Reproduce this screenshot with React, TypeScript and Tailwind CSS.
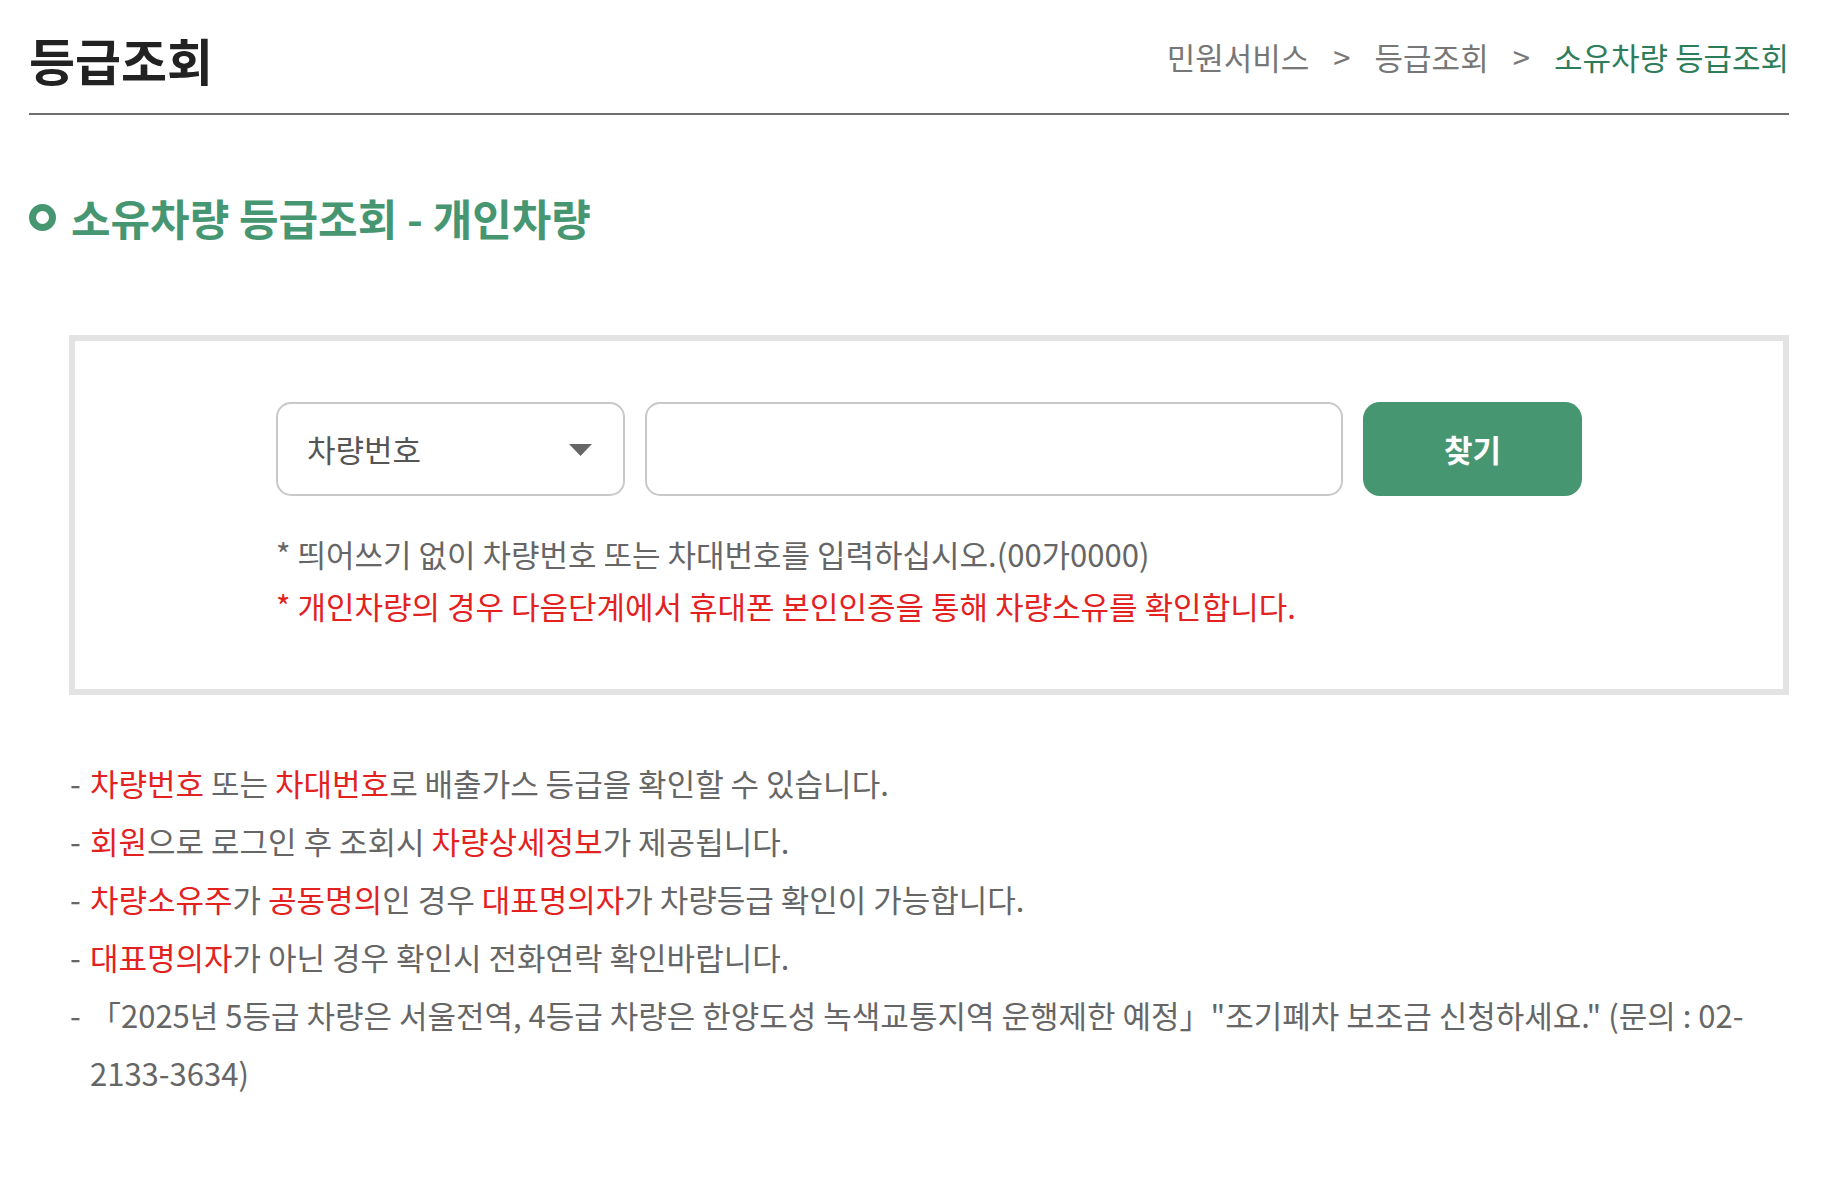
import { useState } from "react";

// 안내 문구 (빨간 강조 + 일반 텍스트)
type Part = { t: string; red?: boolean };

const NOTICES: Part[][] = [
  [
    { t: "차량번호", red: true },
    { t: " 또는 " },
    { t: "차대번호", red: true },
    { t: "로 배출가스 등급을 확인할 수 있습니다." },
  ],
  [
    { t: "회원", red: true },
    { t: "으로 로그인 후 조회시 " },
    { t: "차량상세정보", red: true },
    { t: "가 제공됩니다." },
  ],
  [
    { t: "차량소유주", red: true },
    { t: "가 " },
    { t: "공동명의", red: true },
    { t: "인 경우 " },
    { t: "대표명의자", red: true },
    { t: "가 차량등급 확인이 가능합니다." },
  ],
  [
    { t: "대표명의자", red: true },
    { t: "가 아닌 경우 확인시 전화연락 확인바랍니다." },
  ],
];

function SelectBox() {
  const [value, setValue] = useState("차량번호");
  return (
    <div className="relative w-[349px] h-[94px] shrink-0">
      <select
        value={value}
        onChange={(e) => setValue(e.target.value)}
        className="appearance-none w-full h-full rounded-[15px] border-2 border-[#c9c9c9] bg-white pl-[29px] pr-[60px] text-[31px] text-[#555] outline-none"
      >
        <option>차량번호</option>
        <option>차대번호</option>
      </select>
      {/* 드롭다운 화살표 */}
      <svg
        className="pointer-events-none absolute right-[33px] top-[42px]"
        width="23"
        height="12"
        viewBox="0 0 23 12"
      >
        <path d="M0 0 L23 0 L11.5 12 Z" fill="#666" />
      </svg>
    </div>
  );
}

export default function App() {
  const [keyword, setKeyword] = useState("");

  return (
    <div className="min-h-screen bg-white font-['Noto_Sans_CJK_KR','Noto_Sans',sans-serif]">
      <div className="ml-[29px] w-[1760px]">
        {/* 상단 타이틀 + 경로 */}
        <div className="flex h-[115px] items-center justify-between border-b-2 border-[#6e6e6e]">
          <h1 className="pt-[4px] text-[50px] font-bold leading-none text-[#222]">
            등급조회
          </h1>
          <div className="flex items-center text-[31px] leading-none text-[#777]">
            <span>민원서비스</span>
            <span className="mx-[24px]">&gt;</span>
            <span>등급조회</span>
            <span className="mx-[24px]">&gt;</span>
            <span className="text-[#2e7d5a]">소유차량 등급조회</span>
          </div>
        </div>

        {/* 섹션 제목 */}
        <div className="mt-[81px] flex h-[42px] items-center gap-[15px]">
          <span className="h-[27px] w-[27px] shrink-0 rounded-full border-[7px] border-[#479672]" />
          <h2 className="text-[43px] font-bold leading-none text-[#479672]">
            소유차량 등급조회 - 개인차량
          </h2>
        </div>

        {/* 조회 박스 */}
        <div className="ml-[40px] mt-[97px] border-[6px] border-[#e3e3e3] bg-white pt-[61px] pb-[57px]">
          <div className="mx-auto w-[1306px]">
            <div className="flex gap-[20px]">
              <SelectBox />
              <input
                value={keyword}
                onChange={(e) => setKeyword(e.target.value)}
                className="h-[94px] w-[698px] shrink-0 rounded-[15px] border-2 border-[#c9c9c9] bg-white px-[24px] text-[31px] text-[#333] outline-none"
              />
              <button className="h-[94px] w-[219px] shrink-0 rounded-[17px] bg-[#479672] text-[31px] font-bold text-white">
                찾기
              </button>
            </div>
            <div className="mt-[32px] text-[31px] leading-[52px]">
              <p className="text-[#666]">
                * 띄어쓰기 없이 차량번호 또는 차대번호를 입력하십시오.(00가0000)
              </p>
              <p className="text-[#e3211f]">
                * 개인차량의 경우 다음단계에서 휴대폰 본인인증을 통해 차량소유를 확인합니다.
              </p>
            </div>
          </div>
        </div>

        {/* 안내 목록 */}
        <ul className="ml-[41px] mt-[59px] pb-[60px] text-[31px] leading-[58px] text-[#666]">
          {NOTICES.map((parts, i) => (
            <li key={i} className="flex">
              <span className="w-[20px] shrink-0">-</span>
              <span>
                {parts.map((p, j) =>
                  p.red ? (
                    <span key={j} className="text-[#e3211f]">
                      {p.t}
                    </span>
                  ) : (
                    <span key={j}>{p.t}</span>
                  )
                )}
              </span>
            </li>
          ))}
          <li className="flex">
            <span className="w-[20px] shrink-0">-</span>
            <span>
              「2025년 5등급 차량은 서울전역, 4등급 차량은 한양도성 녹색교통지역 운행제한 예정」"조기폐차 보조금 신청하세요." (문의 : 02-
              <br />
              2133-3634)
            </span>
          </li>
        </ul>
      </div>
    </div>
  );
}
